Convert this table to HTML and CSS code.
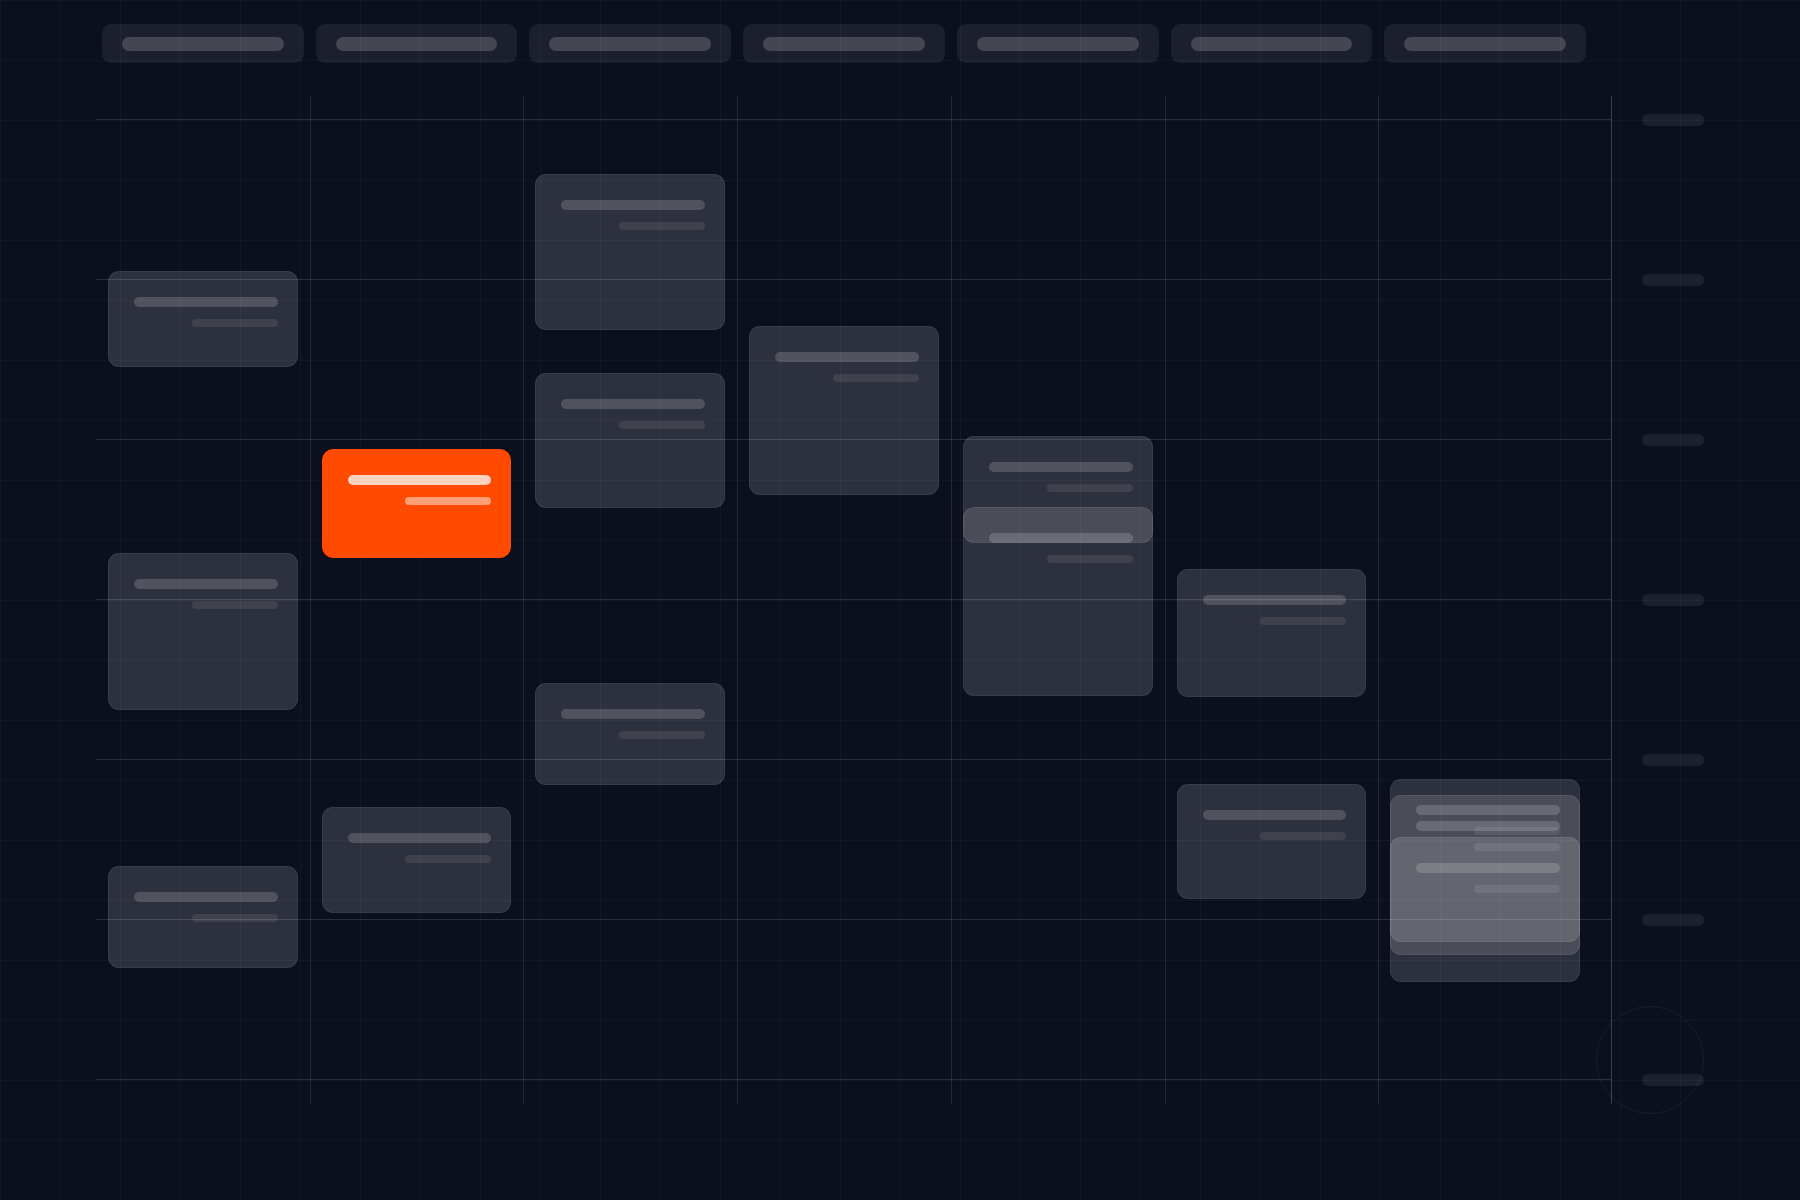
FILE: index.html
```html
<!DOCTYPE html>
<html lang="en">
<head>
<meta charset="utf-8">
<title>Week schedule</title>
<link rel="stylesheet" href="styles.css">
</head>
<body>
<div class="board">
  <div class="main">
    <div class="days">
      <div class="day"><span class="day-bar"></span></div>
      <div class="day"><span class="day-bar"></span></div>
      <div class="day"><span class="day-bar"></span></div>
      <div class="day"><span class="day-bar"></span></div>
      <div class="day"><span class="day-bar"></span></div>
      <div class="day"><span class="day-bar"></span></div>
      <div class="day"><span class="day-bar"></span></div>
    </div>
    <div class="grid">
      <div class="col">
        <div class="ev" style="top:175px;height:96px"><span class="t"></span><span class="s"></span></div>
        <div class="ev" style="top:456.7px;height:157px"><span class="t"></span><span class="s"></span></div>
        <div class="ev" style="top:769.7px;height:102px"><span class="t"></span><span class="s"></span></div>
      </div>
      <div class="col">
        <div class="ev hot" style="top:353px;height:109px"><span class="t"></span><span class="s"></span></div>
        <div class="ev" style="top:710.7px;height:106.7px"><span class="t"></span><span class="s"></span></div>
      </div>
      <div class="col">
        <div class="ev" style="top:78.3px;height:156px"><span class="t"></span><span class="s"></span></div>
        <div class="ev" style="top:277px;height:134.7px"><span class="t"></span><span class="s"></span></div>
        <div class="ev" style="top:586.7px;height:102.3px"><span class="t"></span><span class="s"></span></div>
      </div>
      <div class="col">
        <div class="ev" style="top:230px;height:169px"><span class="t"></span><span class="s"></span></div>
      </div>
      <div class="col">
        <div class="ev" style="top:340px;height:107px"><span class="t"></span><span class="s"></span></div>
        <div class="ev" style="top:411px;height:188.7px"><span class="t"></span><span class="s"></span></div>
      </div>
      <div class="col">
        <div class="ev" style="top:473px;height:127.7px"><span class="t"></span><span class="s"></span></div>
        <div class="ev" style="top:687.7px;height:115.6px"><span class="t"></span><span class="s"></span></div>
      </div>
      <div class="col">
        <div class="ev" style="top:682.7px;height:203.6px"><span class="t"></span><span class="s"></span></div>
        <div class="ev" style="top:698.7px;height:160px"><span class="t"></span><span class="s"></span></div>
        <div class="ev" style="top:741px;height:105.3px"><span class="t"></span><span class="s"></span></div>
      </div>
    </div>
  </div>
  <div class="axis">
    <span class="tick"></span>
    <span class="tick"></span>
    <span class="tick"></span>
    <span class="tick"></span>
    <span class="tick"></span>
    <span class="tick"></span>
    <span class="tick"></span>
  </div>
  <div class="ring"></div>
</div>
</body>
</html>
```

FILE: styles.css
```css
html, body {
  margin: 0;
  padding: 0;
}

body {
  width: 1800px;
  height: 1200px;
  overflow: hidden;
  background-color: #0b0f1e;
  background-image:
    linear-gradient(to right, rgba(255, 255, 255, 0.03) 1px, transparent 1px),
    linear-gradient(to bottom, rgba(255, 255, 255, 0.03) 1px, transparent 1px);
  background-size: 60px 60px;
  font-family: "Inter", "Liberation Sans", sans-serif;
}

.board {
  position: relative;
  display: flex;
  align-items: flex-start;
  padding: 24px 0 0 96px;
  height: 1200px;
  box-sizing: border-box;
}

.main {
  width: 1516px;
  display: flex;
  flex-direction: column;
  gap: 33px;
}

.days {
  display: grid;
  grid-template-columns: repeat(7, 1fr);
  padding-right: 20px;
}

.day {
  height: 39px;
  margin: 0 6px;
  border-radius: 9px;
  background: rgba(255, 255, 255, 0.07);
  display: flex;
  align-items: center;
  padding: 0 20px;
}

.day-bar {
  display: block;
  flex: 1;
  height: 14px;
  border-radius: 7px;
  background: rgba(255, 255, 255, 0.18);
}

.grid {
  height: 1008px;
  display: grid;
  grid-template-columns: repeat(7, 1fr);
  padding-right: 19px;
  border-right: 1px solid rgba(255, 255, 255, 0.2);
  background-image: linear-gradient(to bottom, rgba(255, 255, 255, 0.13) 1px, transparent 1px);
  background-size: 100% 160px;
  background-position: 0 23px;
  background-repeat: repeat-y;
}

.col {
  position: relative;
}

.col + .col {
  box-shadow: inset 1px 0 0 rgba(255, 255, 255, 0.1);
}

.ev {
  position: absolute;
  left: 12px;
  right: 12px;
  box-sizing: border-box;
  border-radius: 11px;
  background: rgba(255, 255, 255, 0.14);
  border: 1px solid rgba(255, 255, 255, 0.06);
  padding: 25px 19px 0 25px;
  display: flex;
  flex-direction: column;
  align-items: flex-end;
  gap: 12px;
}

.ev .t {
  display: block;
  width: 100%;
  height: 10px;
  border-radius: 5px;
  background: rgba(255, 255, 255, 0.17);
}

.ev .s {
  display: block;
  width: 86px;
  height: 8px;
  border-radius: 4px;
  background: rgba(255, 255, 255, 0.085);
}

.ev.hot {
  background: #ff4a00;
  border-color: #ff4a00;
}

.ev.hot .t {
  background: rgba(255, 255, 255, 0.75);
}

.ev.hot .s {
  background: rgba(255, 255, 255, 0.47);
}

.axis {
  margin-left: 30px;
  padding-top: 90px;
  display: flex;
  flex-direction: column;
  gap: 148px;
}

.tick {
  display: block;
  width: 62px;
  height: 12px;
  border-radius: 6px;
  background: rgba(255, 255, 255, 0.07);
}

.ring {
  position: absolute;
  left: 1596px;
  top: 1006px;
  width: 108px;
  height: 108px;
  box-sizing: border-box;
  border-radius: 50%;
  border: 1.5px solid rgba(255, 255, 255, 0.06);
}
```
